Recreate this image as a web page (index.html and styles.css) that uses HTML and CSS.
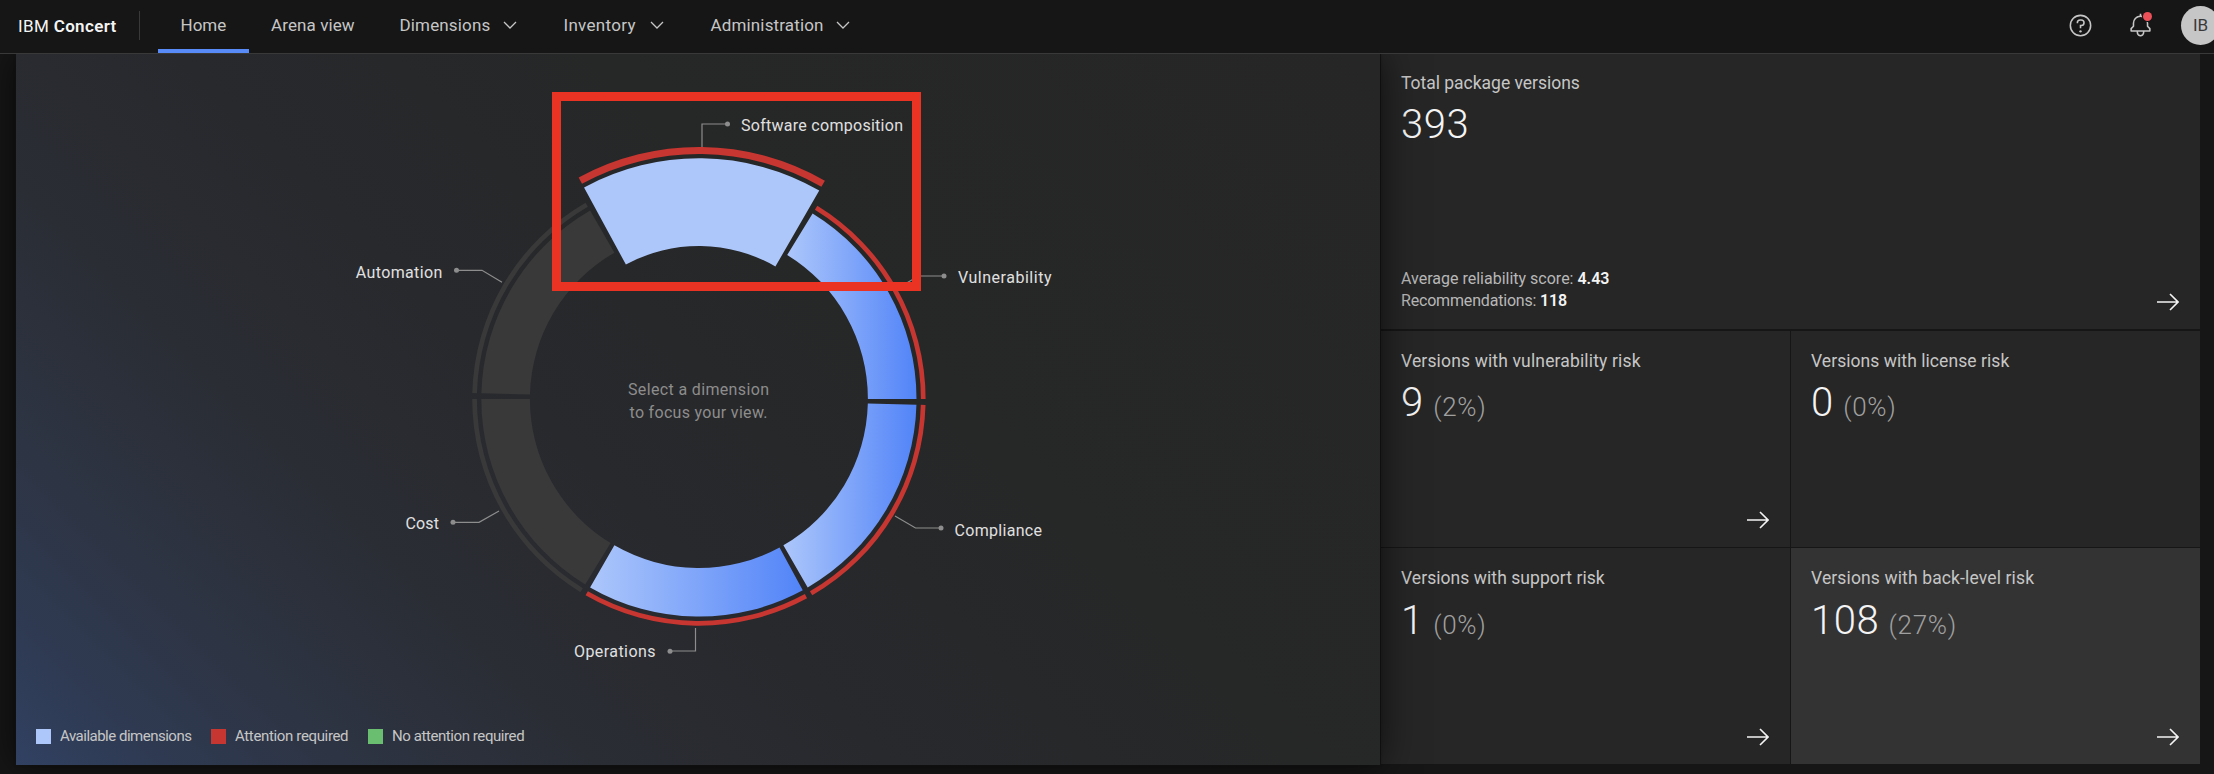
FILE: index.html
```html
<!DOCTYPE html>
<html lang="en">
<head>
<meta charset="utf-8">
<title>IBM Concert</title>
<link rel="stylesheet" href="styles.css">
</head>
<body>
<header class="header">
  <div class="brand">IBM <b>Concert</b></div>
  <nav class="nav">
    <a class="nav-item active"><span class="t-home">Home</span></a>
    <a class="nav-item"><span class="t-arena">Arena view</span></a>
    <a class="nav-item"><span class="t-dim">Dimensions</span><svg class="chevron" viewBox="0 0 14 8"><path d="M1 1l6 6 6-6"/></svg></a>
    <a class="nav-item"><span class="t-inv">Inventory</span><svg class="chevron" viewBox="0 0 14 8"><path d="M1 1l6 6 6-6"/></svg></a>
    <a class="nav-item"><span class="t-adm">Administration</span><svg class="chevron" viewBox="0 0 14 8"><path d="M1 1l6 6 6-6"/></svg></a>
  </nav>
  <div class="tools">
    <svg class="tool-icon" viewBox="0 0 32 32"><path d="M16 2a14 14 0 1 0 14 14A14 14 0 0 0 16 2Zm0 26a12 12 0 1 1 12-12 12 12 0 0 1-12 12Z"/><circle cx="16" cy="23.5" r="1.5"/><path d="M17 8h-1.500A4.490 4.490 0 0 0 11 12.500V13h2v-.5A2.500 2.500 0 0 1 15.500 10H17a2.500 2.500 0 0 1 0 5h-2v4.500h2V17a4.500 4.500 0 0 0 0-9Z"/></svg>
    <div class="bell">
      <svg class="tool-icon" viewBox="0 0 32 32"><path d="M28.707 19.293 26 16.586V13a10.014 10.014 0 0 0-9-9.950V1h-2v2.050A10.014 10.014 0 0 0 6 13v3.586l-2.707 2.707A1 1 0 0 0 3 20v3a1 1 0 0 0 1 1h7v.777a5.152 5.152 0 0 0 4.500 5.199A5.006 5.006 0 0 0 21 25v-1h7a1 1 0 0 0 1-1v-3a1 1 0 0 0-.293-.707ZM19 25a3 3 0 0 1-6 0v-1h6Zm8-3H5v-1.586l2.707-2.707A1 1 0 0 0 8 17v-4a8 8 0 0 1 16 0v4a1 1 0 0 0 .293.707L27 20.414Z"/></svg>
      <span class="badge"></span>
    </div>
    <div class="avatar">IB</div>
  </div>
</header>

<main class="main">
  <section class="dimensions">
    <svg class="chart" viewBox="16 54 1364 711">
      <defs>
        <linearGradient id="blue" x1="0" x2="1" y1="0" y2="0"><stop offset="0" stop-color="#adc7fb"/><stop offset="1" stop-color="#5284f8"/></linearGradient>
      </defs>
      <g id="ring"></g>
      <g class="leader">
        <path d="M702 147V124H727"/><circle cx="727.500" cy="124" r="2.500"/>
        <path d="M898 288L918.500 276H944"/><circle cx="944" cy="276" r="2.500"/>
        <path d="M895 516L915.500 528H941"/><circle cx="941" cy="528" r="2.500"/>
        <path d="M695.500 628V651H670"/><circle cx="670" cy="651.300" r="2.500"/>
        <path d="M499 511L479 522.300H453"/><circle cx="453" cy="522.300" r="2.500"/>
        <path d="M502 282.300L482 270.300H456"/><circle cx="456.500" cy="270.300" r="2.500"/>
      </g>
      <g class="label">
        <text x="741" y="131" textLength="162">Software composition</text>
        <text x="958" y="282.500" textLength="93.500">Vulnerability</text>
        <text x="954.500" y="535.500" textLength="87.500">Compliance</text>
        <text x="574" y="657.300" textLength="81.500">Operations</text>
        <text x="405.500" y="529.300" textLength="33.500">Cost</text>
        <text x="355.800" y="277.500" textLength="86.500">Automation</text>
      </g>
      <g class="hint">
        <text x="628" y="395" textLength="141">Select a dimension</text>
        <text x="629.500" y="418" textLength="138">to focus your view.</text>
      </g>
      <rect class="highlight" x="556.500" y="96.500" width="360" height="190"/>
    </svg>
    <ul class="legend">
      <li class="l1"><i class="swatch blue"></i><span>Available dimensions</span></li>
      <li class="l2"><i class="swatch red"></i><span>Attention required</span></li>
      <li class="l3"><i class="swatch green"></i><span>No attention required</span></li>
    </ul>
  </section>

  <section class="tiles">
    <article class="tile wide">
      <h2 class="h-total">Total package versions</h2>
      <p class="value">393</p>
      <p class="meta"><span class="m1">Average reliability score: <b>4.43</b></span><span class="m2">Recommendations: <b>118</b></span></p>
      <svg class="arrow" viewBox="0 0 22 18"><path d="M0 9H21M13 1l8 8-8 8"/></svg>
    </article>
    <article class="tile">
      <h2 class="h-vuln">Versions with vulnerability risk</h2>
      <p class="value">9<small>(2%)</small></p>
      <svg class="arrow" viewBox="0 0 22 18"><path d="M0 9H21M13 1l8 8-8 8"/></svg>
    </article>
    <article class="tile">
      <h2>Versions with license risk</h2>
      <p class="value">0<small>(0%)</small></p>
    </article>
    <article class="tile">
      <h2>Versions with support risk</h2>
      <p class="value">1<small>(0%)</small></p>
      <svg class="arrow" viewBox="0 0 22 18"><path d="M0 9H21M13 1l8 8-8 8"/></svg>
    </article>
    <article class="tile hover">
      <h2 class="h-back">Versions with back-level risk</h2>
      <p class="value">108<small>(27%)</small></p>
      <svg class="arrow" viewBox="0 0 22 18"><path d="M0 9H21M13 1l8 8-8 8"/></svg>
    </article>
  </section>
</main>
<script src="chart.js"></script>
</body>
</html>
```
FILE: styles.css
```css
* { box-sizing: border-box; }
body {
  margin: 0;
  width: 2214px;
  height: 774px;
  overflow: hidden;
  background: #161616;
  color: #f4f4f4;
  font-family: Roboto, "Liberation Sans", sans-serif;
}
h2, p, ul { margin: 0; padding: 0; }

.header {
  position: relative;
  z-index: 2;
  display: flex;
  align-items: center;
  height: 54px;
  padding-left: 18px;
  background: #161616;
  border-bottom: 1px solid #393939;
}
.brand {
  width: 122px;
  height: 29px;
  margin-bottom: 2px;
  line-height: 30px;
  font-size: 17px;
  letter-spacing: .35px;
  border-right: 1px solid #393939;
  white-space: nowrap;
}
.brand b { font-weight: 600; }
.nav { display: flex; height: 53px; margin-left: 18px; }
.nav-item {
  display: flex;
  align-items: center;
  padding: 0 22.5px;
  height: 53px;
  padding-bottom: 4px;
  font-size: 17px;
  color: #c6c6c6;
  white-space: nowrap;
}
.nav-item span { flex: none; }
.nav-item.active { box-shadow: inset 0 -4px #588bf7; }
.t-home { width: 45.5px; }
.t-arena { width: 83.5px; letter-spacing: .1px; }
.t-dim { width: 91px; letter-spacing: .15px; }
.t-inv { width: 74px; letter-spacing: .3px; }
.t-adm { width: 113px; letter-spacing: .15px; }
.chevron { width: 14px; height: 8px; margin-left: 12px; margin-right: 2px; }
.chevron path { fill: none; stroke: #c6c6c6; stroke-width: 1.300; }

.tools { display: flex; align-items: center; margin-left: auto; margin-right: -6px; padding-bottom: 3px; }
.tool-icon { display: block; width: 25px; height: 25px; fill: #c6c6c6; }
.bell { position: relative; margin-left: 35px; }
.badge {
  position: absolute;
  left: 15px;
  top: -1px;
  width: 9px;
  height: 9px;
  border-radius: 50%;
  background: #ec5058;
  box-shadow: 0 0 0 1px #161616;
}
.avatar {
  width: 39px;
  height: 39px;
  margin-left: 28px;
  border-radius: 50%;
  background: #c6c6c6;
  color: #393939;
  font-size: 17px;
  line-height: 39px;
  text-align: center;
}

.main { display: flex; padding: 0 14px 0 16px; }
.dimensions {
  position: relative;
  z-index: 1;
  width: 1364px;
  height: 711px;
  margin-right: 1px;
  background: linear-gradient(45deg, #314162 0%, #2f3b54 6%, #2d3443 16%, #2a2d34 28%, #28292d 42%, #262727 62%, #262626 100%);
  box-shadow: 0 0 2px #111, 0 0 36px rgba(0, 0, 0, .65);
}
.chart { display: block; width: 1364px; height: 711px; }
.chart .leader path { fill: none; stroke: #8d8d8d; stroke-width: 1.200; }
.chart .leader circle { fill: #8d8d8d; }
.chart text { font-size: 16px; }
.chart .label { fill: #e0e0e0; }
.chart .hint { fill: #8d8d8d; }
.chart .highlight { fill: none; stroke: #ea3323; stroke-width: 9; }
.seg { fill: url(#blue); }
.seg.selected { fill: #adc7fa; }
.seg.disabled, .rim.disabled { fill: #393939; }
.rim { fill: #c83631; }

.legend {
  position: absolute;
  left: 20px;
  bottom: 18px;
  display: flex;
  list-style: none;
  font-size: 15px;
  line-height: 22px;
  color: #c6c6c6;
  white-space: nowrap;
}
.legend li { display: flex; align-items: center; }
.legend .l1 { width: 175px; letter-spacing: -.5px; }
.legend .l2 { width: 157px; letter-spacing: -.35px; }
.legend .l3 { letter-spacing: -.42px; }
.swatch { width: 15px; height: 15px; margin-right: 9px; }
.swatch.blue { background: #adc7fb; }
.swatch.red { background: #c83631; }
.swatch.green { background: #69be70; }

.tiles {
  display: grid;
  grid-template-columns: 409px 409px;
  grid-template-rows: 275px 216px 216px;
  column-gap: 1px;
  row-gap: 1.500px;
  width: 819px;
}
.tile {
  display: flex;
  flex-direction: column;
  position: relative;
  padding: 18px 20px;
  background: #262626;
}
.tile.wide { grid-column: 1 / 3; padding-top: 16.5px; }
.tile.hover { background: #333; }
.tile h2 {
  font-size: 17.500px;
  line-height: 24px;
  font-weight: 400;
  letter-spacing: .06px;
  color: #c6c6c6;
}
.tile .h-total { letter-spacing: -.02px; }
.tile .h-vuln { letter-spacing: .15px; }
.tile .h-back { letter-spacing: .13px; }
.tile .value {
  margin-top: 6.5px;
  font-size: 40px;
  line-height: 47px;
  font-weight: 300;
  letter-spacing: .5px;
}
.tile small { margin-left: 9.5px; font-size: 26px; letter-spacing: .7px; color: #a0a0a0; }
.meta {
  display: flex;
  flex-direction: column;
  margin-top: auto;
  margin-bottom: -1px;
  font-size: 16px;
  line-height: 22px;
  color: #b8b8b8;
}
.meta b { color: #f4f4f4; font-weight: 600; }
.m1 { letter-spacing: 0; }
.m2 { letter-spacing: -.18px; }
.arrow {
  position: absolute;
  right: 21px;
  bottom: 18px;
  width: 22px;
  height: 18px;
}
.arrow path { fill: none; stroke: #f4f4f4; stroke-width: 1.600; }
```
FILE: chart.js
```js
// Draws the six dimension segments and their outer rims.
const CX = 698.9, CY = 399;
const ring = document.getElementById('ring');

function point(r, deg) {
  const a = deg * Math.PI / 180;
  return (CX + r * Math.sin(a)).toFixed(2) + ' ' + (CY - r * Math.cos(a)).toFixed(2);
}

function arc(inner, outer, from, cls) {
  const to = from + 58.5;
  const path = document.createElementNS('http://www.w3.org/2000/svg', 'path');
  path.setAttribute('d', `M${point(outer, from)}A${outer} ${outer} 0 0 1 ${point(outer, to)}` +
    `L${point(inner, to)}A${inner} ${inner} 0 0 0 ${point(inner, from)}Z`);
  path.setAttribute('class', cls);
  ring.appendChild(path);
}

[
  { from: 31.5 },
  { from: 91.5 },
  { from: 151.5 },
  { from: 211.5, state: 'disabled' },
  { from: 271.5, state: 'disabled' },
  { from: 331.5, state: 'selected' }
].forEach(({ from, state = '' }) => {
  const big = state === 'selected';
  arc(big ? 153 : 169, big ? 240.7 : 217.6, from, `seg ${state}`);
  arc(big ? 245 : 222, big ? 252 : 226.7, from, `rim ${state}`);
});
```
